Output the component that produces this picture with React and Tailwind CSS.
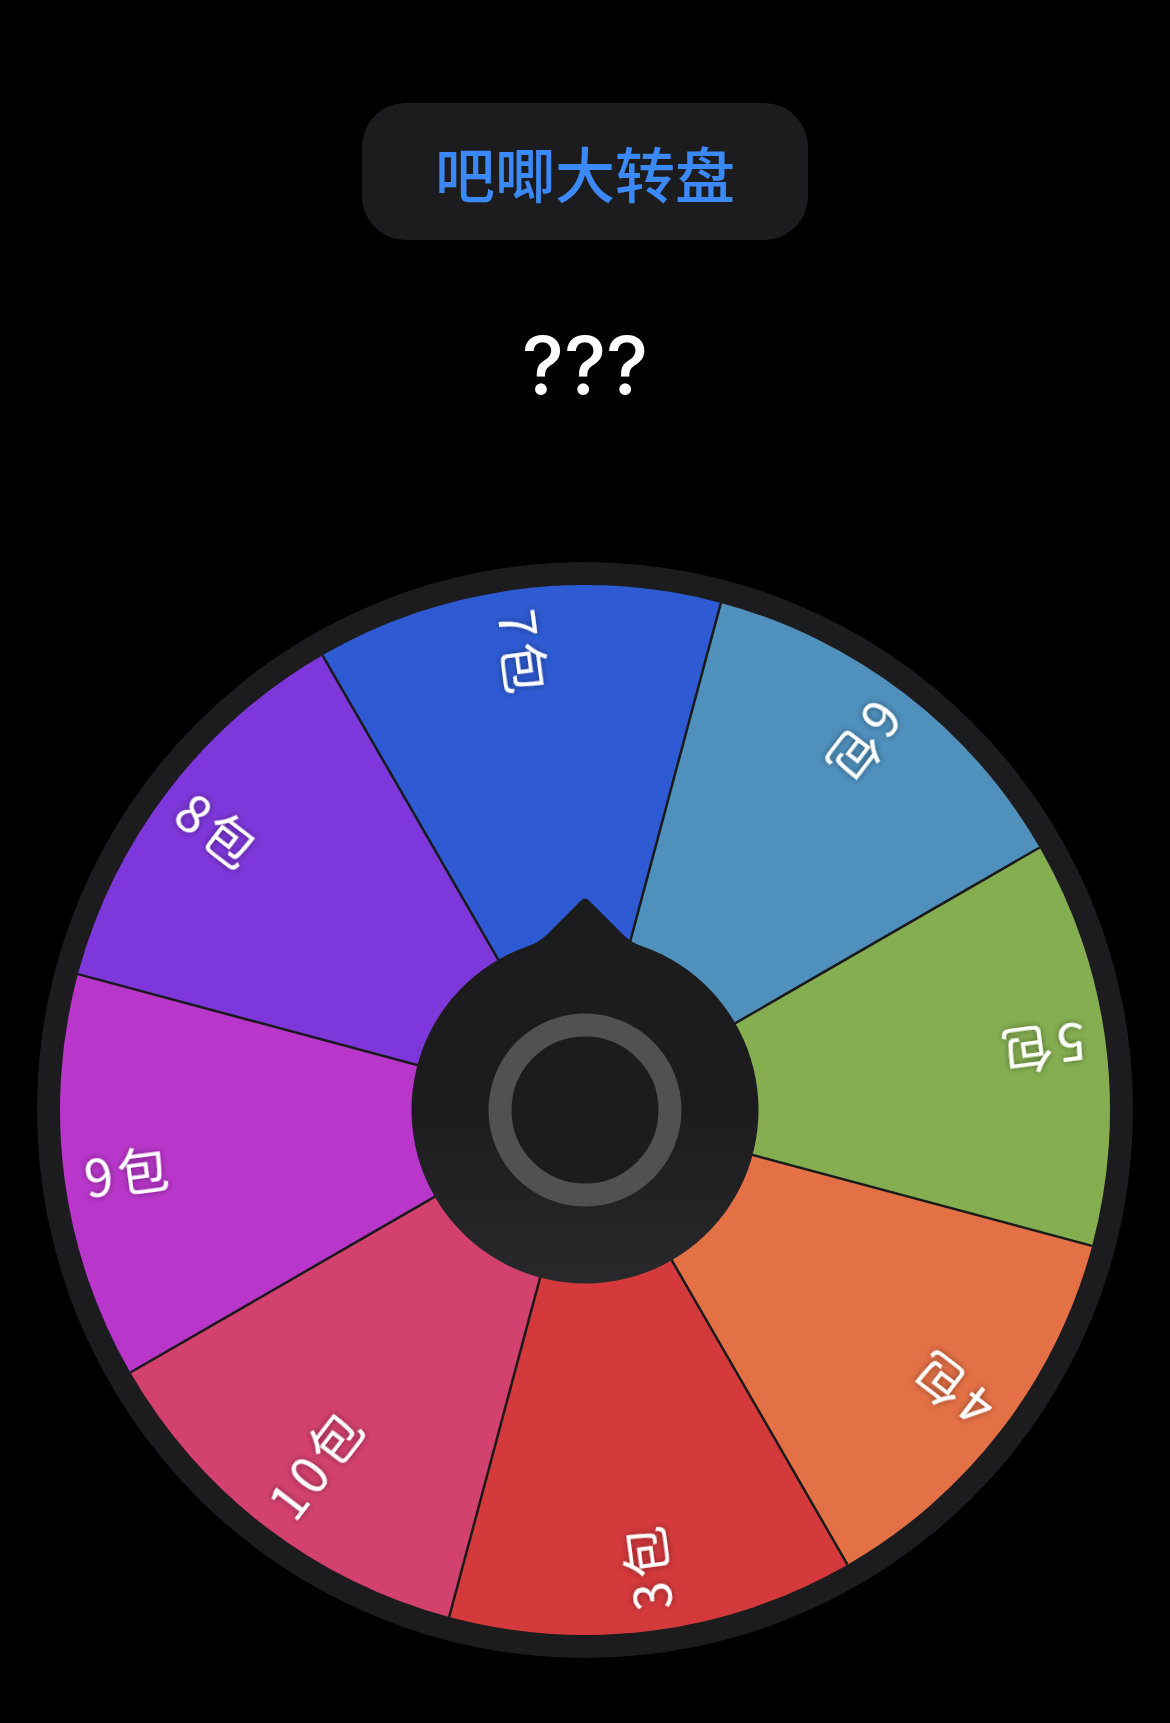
import React from "react";

const SEGMENTS = [
  { label: "7包", color: "#2e5bd3" },
  { label: "6包", color: "#4f90bd" },
  { label: "5包", color: "#85ae51" },
  { label: "4包", color: "#e47045" },
  { label: "3包", color: "#d4393c" },
  { label: "10包", color: "#d3416e" },
  { label: "9包", color: "#b936ca" },
  { label: "8包", color: "#7e37da" },
];

const R_OUT = 548;
const R_SEG = 525;
const START = -30; // degrees clockwise from top

function pt(r, deg) {
  const a = (deg * Math.PI) / 180;
  return [r * Math.sin(a), -r * Math.cos(a)];
}

function Wheel() {
  const step = 360 / SEGMENTS.length;
  return (
    <svg width="1110" height="1110" viewBox="-555 -555 1110 1110" className="block">
      <defs>
        <linearGradient id="hubGrad" x1="0" y1="0" x2="0" y2="1">
          <stop offset="0" stopColor="#1c1c1e" />
          <stop offset="0.55" stopColor="#1c1c1e" />
          <stop offset="1" stopColor="#29292c" />
        </linearGradient>
        <filter id="txtShadow" x="-30%" y="-60%" width="160%" height="220%">
          <feDropShadow dx="0" dy="0" stdDeviation="3" floodColor="#000" floodOpacity="0.45" />
        </filter>
      </defs>
      <circle cx="0" cy="0" r={R_OUT} fill="#1c1c1e" />
      {SEGMENTS.map((s, i) => {
        const a1 = START + i * step;
        const a2 = a1 + step;
        const [x1, y1] = pt(R_SEG, a1);
        const [x2, y2] = pt(R_SEG, a2);
        return (
          <path
            key={s.label}
            d={`M0 0 L${x1} ${y1} A${R_SEG} ${R_SEG} 0 0 1 ${x2} ${y2} Z`}
            fill={s.color}
          />
        );
      })}
      {SEGMENTS.map((s, i) => {
        const a = START + i * step;
        const [x, y] = pt(R_SEG, a);
        return <line key={"l" + i} x1="0" y1="0" x2={x} y2={y} stroke="#1a1a1c" strokeWidth="2.5" />;
      })}
      {SEGMENTS.map((s, i) => {
        const c = START + i * step + step / 2;
        return (
          <g key={"t" + i} transform={`rotate(${c}) translate(0 -505) rotate(90)`}>
            <text
              x="0"
              y="0"
              dominantBaseline="central"
              textAnchor="start"
              fill="#ffffff"
              fontSize="51"
              fontWeight="400"
              letterSpacing="5"
              fontFamily="'Noto Sans CJK SC', 'Noto Sans', sans-serif"
              filter="url(#txtShadow)"
            >
              {s.label}
            </text>
          </g>
        );
      })}
      <path
        d="M-38 -175.5 L-4 -209.5 Q0 -213.5 4 -209.5 L38 -175.5 Q46.3 -167.2 58 -163.5 A173.5 173.5 0 1 1 -58 -163.5 Q-46.3 -167.2 -38 -175.5 Z"
        fill="url(#hubGrad)"
      />
      <circle cx="0" cy="0" r="85" fill="#1c1c1e" stroke="#515153" strokeWidth="23" />
    </svg>
  );
}

export default function App() {
  return (
    <div className="min-h-[1723px] w-full bg-black flex flex-col items-center">
      <div className="mt-[103px] w-[446px] h-[137px] rounded-[44px] bg-[#1c1c1e] flex items-center justify-center">
        <span className="text-[60px] leading-none font-medium text-[#3b89f6] font-['Noto_Sans_CJK_SC',sans-serif]">
          吧唧大转盘
        </span>
      </div>
      <div className="mt-[85px] h-[80px] text-[80px] leading-none font-medium text-white font-['Inter',sans-serif]">
        ???
      </div>
      <div className="mt-[150px]">
        <Wheel />
      </div>
    </div>
  );
}
